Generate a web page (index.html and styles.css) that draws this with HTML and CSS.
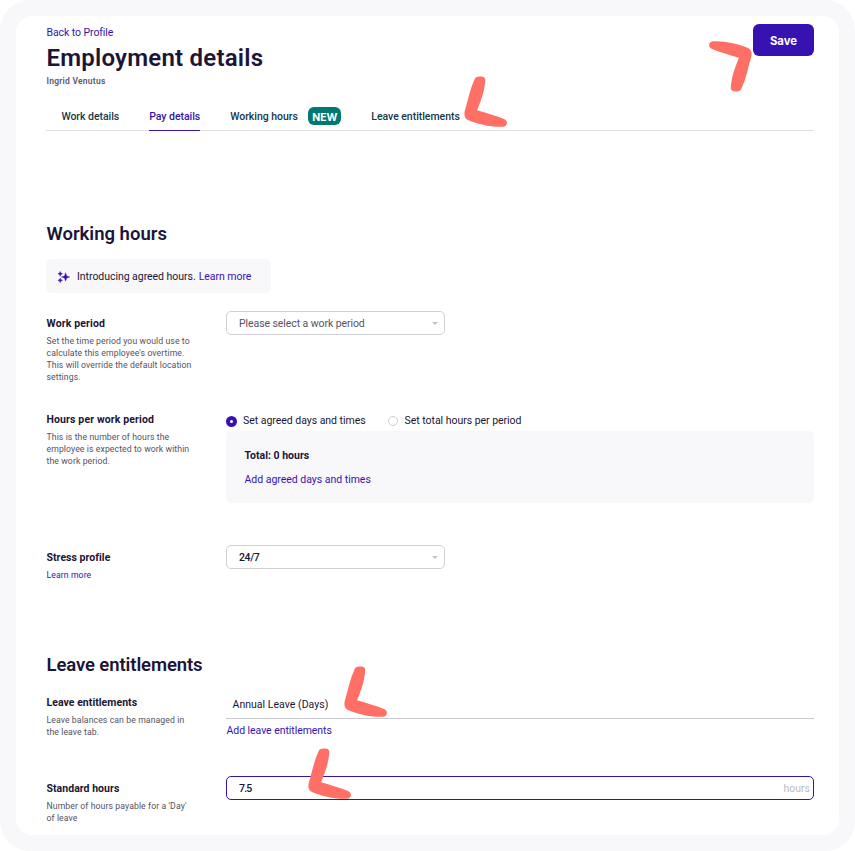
FILE: index.html
```html
<!DOCTYPE html>
<html lang="en">
<head>
<meta charset="utf-8">
<title>Employment details</title>
<link rel="stylesheet" href="styles.css">
</head>
<body>
<svg class="defs" aria-hidden="true">
  <symbol id="pointer" viewBox="0 0 44 52">
    <path d="M10.600 3.200C11.600.9 13.400.3 17.200.6c3.100.2 4.200 1.400 4 3.800C20.600 14.500 17.400 23.800 13.100 34.300c9.500 2.900 18.300 5.300 26.900 8.800 4.500 1.800 3.600 7.300-1.200 7.700C27.500 51.400 13.200 48.200 3.500 43.800.2 42.300-.2 37.600 1 34.300 4.200 23.300 6 13 10.600 3.200Z"/>
  </symbol>
</svg>
<div class="frame">
<main class="card">
  <header class="header">
    <div>
      <a class="back">Back to Profile</a>
      <h1 class="title">Employment details</h1>
      <p class="person">Ingrid Venutus</p>
    </div>
    <button class="save">Save</button>
    <svg class="pointer pointer-save"><use href="#pointer"/></svg>
  </header>
  <nav class="tabs">
    <a class="tab">Work details</a>
    <a class="tab active">Pay details</a>
    <a class="tab"><span>Working hours</span><span class="badge">NEW</span></a>
    <a class="tab">Leave entitlements<svg class="pointer pointer-tab"><use href="#pointer"/></svg></a>
  </nav>

  <section>
    <h2 class="heading">Working hours</h2>
    <div class="banner">
      <svg class="sparkle" viewBox="0 0 12 12"><path d="M7.600 1.800 8.700 4.900 11.800 6 8.700 7.100 7.600 10.200 6.500 7.100 3.400 6 6.500 4.900ZM2.200.4l.7 1.700 1.700.7-1.700.7-.7 1.700-.7-1.700L-.1 2.800l1.600-.7ZM2.200 7l.7 1.600 1.700.7-1.700.7-.7 1.700L1.500 10l-1.600-.7 1.600-.7Z"/></svg>
      <span>Introducing agreed hours.</span> <a class="learn">Learn more</a>
    </div>
    <div class="row row-period">
      <div class="info">
        <h3 class="label label-wide">Work period</h3>
        <p class="help">Set the time period you would use to<br>calculate this employee's overtime.<br>This will override the default location<br>settings.</p>
      </div>
      <div class="select placeholder"><span>Please select a work period</span><i class="caret"></i></div>
    </div>
    <div class="row row-agreed">
      <div class="info">
        <h3 class="label label-wide">Hours per work period</h3>
        <p class="help">This is the number of hours the<br>employee is expected to work within<br>the work period.</p>
      </div>
      <div>
        <div class="radios">
          <label class="option first"><i class="radio on"></i><span>Set agreed days and times</span></label>
          <label class="option"><i class="radio"></i><span>Set total hours per period</span></label>
        </div>
        <div class="panel"><strong class="total">Total: 0 hours</strong><a class="add-days">Add agreed days and times</a></div>
      </div>
    </div>
    <div class="row row-stress">
      <div class="info">
        <h3 class="label">Stress profile</h3>
        <p class="help"><a>Learn more</a></p>
      </div>
      <div class="select profile"><span>24/7</span><i class="caret"></i></div>
    </div>
  </section>

  <section>
    <h2 class="heading heading-leave">Leave entitlements</h2>
    <div class="row row-leave">
      <div class="info">
        <h3 class="label">Leave entitlements</h3>
        <p class="help">Leave balances can be managed in<br>the leave tab.</p>
      </div>
      <div>
        <div class="entry">Annual Leave (Days)<svg class="pointer pointer-entry"><use href="#pointer"/></svg></div>
        <a class="add-leave">Add leave entitlements</a>
      </div>
    </div>
    <div class="row row-standard">
      <div class="info">
        <h3 class="label">Standard hours</h3>
        <p class="help">Number of hours payable for a 'Day'<br>of leave</p>
      </div>
      <div class="input"><span class="value">7.5</span><span class="unit">hours</span><svg class="pointer pointer-input"><use href="#pointer"/></svg></div>
    </div>
  </section>
</main>
</div>
</body>
</html>
```
FILE: styles.css
```css
* { box-sizing: border-box; }
body { margin: 0; background: #fff; color: #1b1537; font: 500 10.5px/16px Roboto, "Liberation Sans", sans-serif; }
h1, h2, h3, p { margin: 0; }
a { color: #3612b0; }
.defs { display: none; }
.frame { height: 851px; padding: 16px; border-radius: 30px; background: #f8f8fb; }
.card { height: 819px; padding: 8px 25px 0 30px; border-radius: 16px; background: #fff; overflow: hidden; }

.header { position: relative; display: flex; justify-content: space-between; align-items: flex-start; height: 74px; padding-left: .5px; }
.back { display: block; padding-top: 1px; font-weight: 400; letter-spacing: -.08px; }
.title { font-size: 24px; line-height: 34px; font-weight: 600; letter-spacing: .22px; }
.person { font-size: 8.5px; line-height: 12px; color: #5b5867; font-weight: 600; letter-spacing: .25px; }
.save { width: 61px; height: 32px; border: 0; border-radius: 6px; background: #3612b0; color: #fff; font: 700 11.3px/32px Inter, sans-serif; padding: 1px 0 0; }

.tabs { display: flex; height: 33px; margin-bottom: 91px; padding-left: 15.4px; gap: 30px; border-bottom: 1px solid #dfdfe8; }
.tab { position: relative; display: flex; height: 33px; padding-top: 11px; color: #18374a; white-space: nowrap; letter-spacing: -.04px; }
.tab.active { color: #3612b0; border-bottom: 1px solid #3612b0; }
.badge { width: 33px; height: 18px; margin: -2px 0 0 10.5px; border-radius: 6px; background: #017872; color: #fff; text-align: center; font: 700 10.5px/21px Inter, sans-serif; }

.heading { padding-left: .5px; font-size: 18.5px; line-height: 24px; font-weight: 600; }
.heading-leave { padding-top: 1px; letter-spacing: -.1px; }
.banner { display: flex; align-items: center; width: 225px; height: 34px; margin: 13px 0 18px; padding: 1px 0 0 12px; border-radius: 5px; background: #f8f8fb; font-weight: 400; white-space: nowrap; letter-spacing: -.04px; }
.sparkle { width: 12px; height: 12px; margin-right: 7px; fill: #3612b0; stroke: #3612b0; stroke-width: .4; overflow: visible; }
.learn { margin-left: 3px; }

.row { display: grid; grid-template-columns: 180px 588px; align-items: start; }
.row-period { height: 96px; }
.row-agreed { height: 138px; }
.row-stress { height: 107px; }
.row-leave { height: 86px; margin-top: 13px; }
.info { padding: 5px 0 0 .5px; }
.label { font-size: 10.5px; line-height: 16px; font-weight: 700; letter-spacing: .04px; }
.label-wide { letter-spacing: .13px; }
.help { padding-top: 3px; color: #55525f; font-size: 8.7px; line-height: 12px; font-weight: 400; white-space: nowrap; letter-spacing: .085px; }

.select { display: flex; align-items: center; justify-content: space-between; width: 219px; height: 24px; padding: 1px 6px 0 12px; border: 1px solid #cfcfd5; border-radius: 5px; }
.placeholder { color: #55525f; font-weight: 400; letter-spacing: -.08px; }
.profile { letter-spacing: -.4px; }
.caret { border: 3px solid transparent; border-top: 3px solid #c2c2ca; border-bottom: 0; }

.radios { display: flex; height: 24px; padding-top: 6px; gap: 22px; font-weight: 400; letter-spacing: -.03px; white-space: nowrap; }
.option { display: flex; align-items: center; height: 16px; }
.option.first { width: 140px; }
.radio { flex: none; width: 10px; height: 10px; margin-right: 6.5px; border: 1px solid #cfcfd5; border-radius: 50%; }
.radio.on { width: 11px; height: 11px; margin-right: 6px; border: 4px solid #3612b0; }
.panel { display: flex; flex-direction: column; gap: 8px; height: 72px; padding: 17px 18.5px; border-radius: 5px; background: #f8f8fb; }
.total { font-weight: 700; }
.add-days { font-weight: 400; letter-spacing: -.02px; }

.entry { position: relative; height: 29px; padding: 7px 6.5px 0; border-bottom: 1px solid #c9c9d0; font-weight: 400; letter-spacing: .03px; }
.add-leave { display: block; padding: 4px 0 0 .5px; font-weight: 400; letter-spacing: -.06px; }
.input { position: relative; display: flex; align-items: center; justify-content: space-between; height: 24px; padding: 2px 3px 0 12px; border: 1px solid #3612b0; border-radius: 5px; }
.value { letter-spacing: -.8px; }
.unit { color: #bcbcc2; font-weight: 400; }

.pointer { position: absolute; z-index: 1; width: 44px; height: 52px; fill: #ff6f65; overflow: visible; }
.pointer-save { left: 662px; top: 16px; transform: rotate(180deg); }
.pointer-tab { left: 92.5px; top: -22px; }
.pointer-entry { left: 118px; top: -24px; }
.pointer-input { left: 81px; top: -29px; }
```
